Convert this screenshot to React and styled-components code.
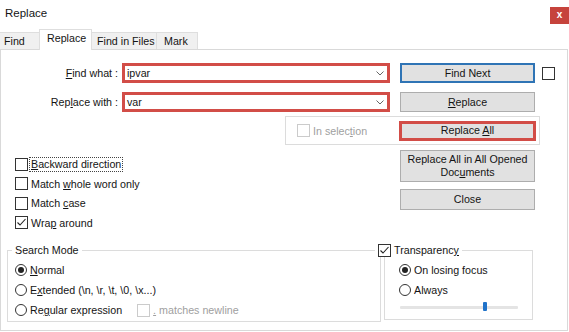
import React from "react";
import styled, { createGlobalStyle, css } from "styled-components";

const red = "#d24d47";

const GlobalStyle = createGlobalStyle`
  html, body {
    margin: 0;
    padding: 0;
    background: #fff;
  }
  body {
    font-family: "Liberation Sans", Arial, sans-serif;
    font-size: 10.7px;
    color: #141414;
  }
  u {
    text-underline-offset: 1px;
  }
`;

function Check({ checked, disabled }) {
  return (
    <Box $disabled={disabled}>
      {checked && (
        <svg width="11" height="11" viewBox="0 0 11 11">
          <polyline points="1.5,5.5 4,8 9.5,2" fill="none" stroke="#222" strokeWidth="1.1" />
        </svg>
      )}
    </Box>
  );
}

function Radio({ on }) {
  return <Circle>{on && <Dot />}</Circle>;
}

function Chevron() {
  return (
    <svg width="8" height="5" viewBox="0 0 8 5">
      <path d="M0.5 0.5 L4 4 L7.5 0.5" fill="none" stroke="#666" strokeWidth="1" />
    </svg>
  );
}

function Button({ children, ...rest }) {
  return (
    <ActionButton {...rest}>
      <span>{children}</span>
    </ActionButton>
  );
}

function App() {
  const opacity = 70;

  return (
    <>
      <GlobalStyle />
      <Window>
        <TitleBar>
          <Title>Replace</Title>
          <CloseX>x</CloseX>
        </TitleBar>

        <Tabs>
          <Tab $w={41} $pad={4}>Find</Tab>
          <Tab $w={53} $pad={7} $active>Replace</Tab>
          <Tab $w={66} $pad={5}>Find in Files</Tab>
          <Tab $w={42} $pad={7}>Mark</Tab>
        </Tabs>

        <Panel>
          <FieldRow>
            <FieldLabel><u>F</u>ind what :</FieldLabel>
            <Combo>
              <span>ipvar</span>
              <Chevron />
            </Combo>
            <Button $focus>Find Next</Button>
            <Trailing>
              <Check />
            </Trailing>
          </FieldRow>

          <FieldRow $gap={9}>
            <FieldLabel>Rep<u>l</u>ace with :</FieldLabel>
            <Combo>
              <span>var</span>
              <Chevron />
            </Combo>
            <Button><u>R</u>eplace</Button>
          </FieldRow>

          <SelectionBox>
            <Check disabled />
            <Muted $ml={3}>In selec<u>t</u>ion</Muted>
            <Button $flagged $w={137}>Replace <u>A</u>ll</Button>
          </SelectionBox>

          <Middle>
            <Options>
              <Option>
                <Check />
                <FocusText><u>B</u>ackward direction</FocusText>
              </Option>
              <Option>
                <Check />
                <OptionText>Match <u>w</u>hole word only</OptionText>
              </Option>
              <Option>
                <Check />
                <OptionText>Match <u>c</u>ase</OptionText>
              </Option>
              <Option>
                <Check checked />
                <OptionText>Wra<u>p</u> around</OptionText>
              </Option>
            </Options>

            <SideButtons>
              <Button $h={32}>
                Replace All in All Opened
                <br />
                Doc<u>u</u>ments
              </Button>
              <Button $h={21}>Close</Button>
            </SideButtons>
          </Middle>

          <BottomRow>
            <GroupBox $w={374} $h={72} $ml={6}>
              <Legend $ml={4}>Search Mode</Legend>
              <RadioList $pl={7}>
                <RadioRow>
                  <Radio on />
                  <OptionText><u>N</u>ormal</OptionText>
                </RadioRow>
                <RadioRow>
                  <Radio />
                  <OptionText>E<u>x</u>tended (\n, \r, \t, \0, \x...)</OptionText>
                </RadioRow>
                <RadioRow>
                  <Radio />
                  <OptionText>Re<u>g</u>ular expression</OptionText>
                  <NewlineOpt>
                    <Check disabled />
                    <Muted $ml={3}><u>.</u> matches newline</Muted>
                  </NewlineOpt>
                </RadioRow>
              </RadioList>
            </GroupBox>

            <GroupBox $w={149} $h={70} $ml={3}>
              <Legend $ml={-10}>
                <Check checked />
                <OptionText>Transparenc<u>y</u></OptionText>
              </Legend>
              <RadioList $pl={14}>
                <RadioRow>
                  <Radio on />
                  <OptionText>On losing focus</OptionText>
                </RadioRow>
                <RadioRow>
                  <Radio />
                  <OptionText>Always</OptionText>
                </RadioRow>
              </RadioList>
              <SliderRow>
                <Track>
                  <Thumb style={{ left: `${opacity}%` }} />
                </Track>
              </SliderRow>
            </GroupBox>
          </BottomRow>
        </Panel>
      </Window>
    </>
  );
}

const Window = styled.div`
  width: 569px;
  height: 332px;
  background: #fff;
  overflow: hidden;
  display: flex;
  flex-direction: column;
`;

const TitleBar = styled.div`
  height: 29px;
  display: flex;
  justify-content: space-between;
  align-items: flex-start;
`;

const Title = styled.div`
  padding: 6px 0 0 5px;
  line-height: 14px;
  font-size: 11.5px;
`;

const CloseX = styled.div`
  width: 19px;
  height: 17px;
  margin-top: 7px;
  background: #c6433c;
  color: #fff;
  font-size: 10px;
  font-weight: bold;
  display: flex;
  align-items: center;
  justify-content: center;
  padding-bottom: 2px;
  box-sizing: border-box;
`;

const Tabs = styled.div`
  height: 20px;
  display: flex;
  align-items: flex-end;
  position: relative;
  z-index: 1;
`;

const Tab = styled.div`
  box-sizing: border-box;
  width: ${(p) => p.$w}px;
  height: 17px;
  padding: 1px 0 0 ${(p) => p.$pad}px;
  line-height: 15px;
  background: #f0f0f0;
  border: 1px solid #dedede;
  border-bottom: none;
  margin-left: -1px;
  white-space: nowrap;

  ${(p) =>
    p.$active &&
    css`
      height: 21px;
      margin-bottom: -1px;
      background: #fff;
      padding-top: 1px;
    `}
`;

const Panel = styled.div`
  box-sizing: border-box;
  width: 568px;
  height: 282px;
  border: 1px solid #d9d9d9;
  display: flex;
  flex-direction: column;
  padding-bottom: 8px;
`;

const FieldRow = styled.div`
  height: 20px;
  margin-top: ${(p) => p.$gap ?? 13}px;
  display: flex;
  align-items: center;
`;

const FieldLabel = styled.div`
  width: 117px;
  margin-right: 4px;
  text-align: right;
  white-space: nowrap;
`;

const Combo = styled.div`
  box-sizing: border-box;
  width: 268px;
  height: 20px;
  margin-right: 10px;
  border: 3px solid ${red};
  background: #fff;
  display: flex;
  align-items: center;
  justify-content: space-between;
  padding: 0 3px 0 2px;
`;

const ActionButton = styled.div`
  box-sizing: border-box;
  width: ${(p) => p.$w ?? 135}px;
  height: ${(p) => p.$h ?? 20}px;
  flex: none;
  background: #e1e1e1;
  border: 1px solid #adadad;
  display: flex;
  align-items: center;
  justify-content: center;
  text-align: center;
  line-height: 13px;
  white-space: nowrap;

  ${(p) =>
    p.$focus &&
    css`
      border: 2px solid #2f74b5;
    `}

  ${(p) =>
    p.$flagged &&
    css`
      border: 3px solid ${red};
      margin-left: auto;
      margin-right: 3px;
    `}
`;

const Trailing = styled.div`
  margin-left: 7px;
  display: flex;
`;

const Box = styled.span`
  box-sizing: border-box;
  width: 13px;
  height: 13px;
  flex: none;
  border: 1px solid ${(p) => (p.$disabled ? "#cbcbcb" : "#333")};
  background: #fff;
  display: inline-flex;
  align-items: center;
  justify-content: center;
`;

const Circle = styled.span`
  box-sizing: border-box;
  width: 12px;
  height: 12px;
  flex: none;
  border: 1px solid #333;
  border-radius: 50%;
  background: #fff;
  display: inline-flex;
  align-items: center;
  justify-content: center;
`;

const Dot = styled.span`
  width: 6px;
  height: 6px;
  border-radius: 50%;
  background: #222;
`;

const SelectionBox = styled.div`
  box-sizing: border-box;
  width: 255px;
  height: 29px;
  margin: 4px 0 0 284px;
  border: 1px solid #dcdcdc;
  display: flex;
  align-items: center;
  padding-left: 11px;
`;

const Muted = styled.span`
  color: #a0a0a0;
  margin-left: ${(p) => p.$ml ?? 0}px;
  white-space: nowrap;
`;

const Middle = styled.div`
  margin-top: 5px;
  display: grid;
  grid-template-columns: 399px 135px;
`;

const Options = styled.div`
  padding: 5px 0 0 14px;
  display: flex;
  flex-direction: column;
`;

const Option = styled.div`
  height: 19.33px;
  display: flex;
  align-items: center;
`;

const OptionText = styled.span`
  margin-left: 3px;
  white-space: nowrap;
`;

const FocusText = styled(OptionText)`
  margin-left: 2px;
  padding: 0 1px;
  outline: 1px dotted #444;
  line-height: 13px;
`;

const SideButtons = styled.div`
  display: flex;
  flex-direction: column;
  gap: 7px;
`;

const BottomRow = styled.div`
  margin-top: auto;
  display: flex;
  align-items: flex-end;
`;

const GroupBox = styled.div`
  box-sizing: border-box;
  width: ${(p) => p.$w}px;
  height: ${(p) => p.$h}px;
  margin-left: ${(p) => p.$ml}px;
  margin-bottom: ${(p) => 72 - p.$h}px;
  border: 1px solid #dcdcdc;
  display: flex;
  flex-direction: column;
`;

const Legend = styled.div`
  width: fit-content;
  height: 14px;
  margin: -8px 0 0 ${(p) => p.$ml}px;
  padding: 0 3px;
  background: #fff;
  display: flex;
  align-items: center;
  white-space: nowrap;
`;

const RadioList = styled.div`
  margin-top: 3px;
  padding-left: ${(p) => p.$pl}px;
  display: flex;
  flex-direction: column;
`;

const RadioRow = styled.div`
  height: 20px;
  display: flex;
  align-items: center;
`;

const NewlineOpt = styled.span`
  margin-left: 15px;
  display: inline-flex;
  align-items: center;
`;

const SliderRow = styled.div`
  height: 14px;
  padding-left: 15px;
  display: flex;
  align-items: center;
`;

const Track = styled.div`
  position: relative;
  width: 118px;
  height: 3px;
  background: #e4e4e4;
  border-radius: 1px;
`;

const Thumb = styled.span`
  position: absolute;
  top: -4px;
  width: 4px;
  height: 9px;
  background: #1f72c9;
  border-radius: 1px;
`;

export default App;
